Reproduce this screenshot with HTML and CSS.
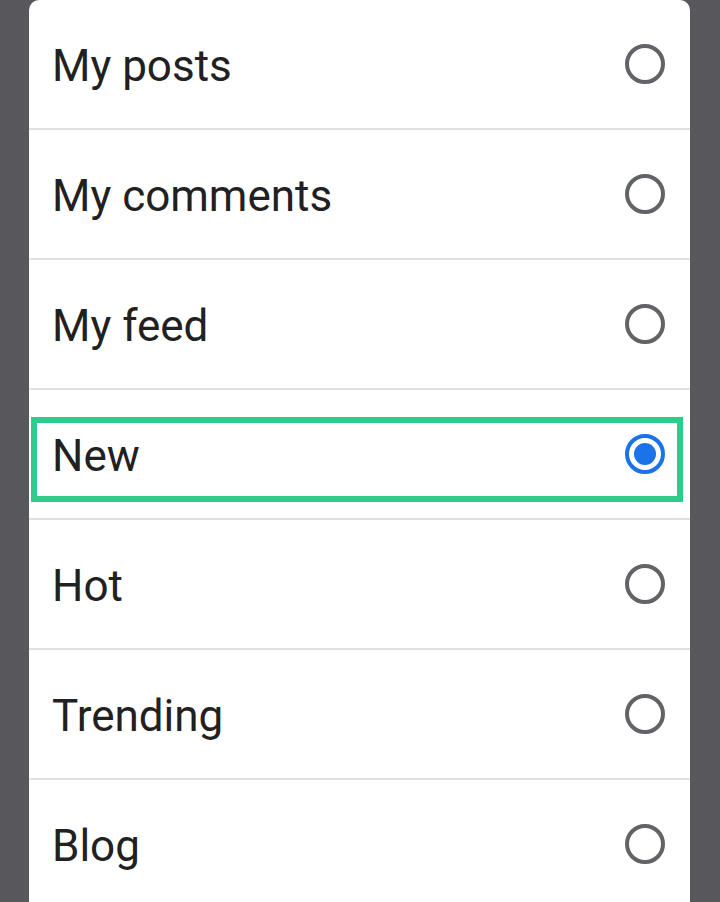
FILE: index.html
```html
<!DOCTYPE html>
<html lang="en">
<head>
    <meta charset="UTF-8">
    <meta name="viewport" content="width=device-width, initial-scale=1.0">
    <title>Feed filter</title>
    <link rel="stylesheet" href="styles.css">
</head>
<body>
    <div class="dialog">
        <div class="option">
            <span class="label">My posts</span>
            <span class="radio"></span>
        </div>
        <div class="option">
            <span class="label">My comments</span>
            <span class="radio"></span>
        </div>
        <div class="option">
            <span class="label">My feed</span>
            <span class="radio"></span>
        </div>
        <div class="option selected">
            <span class="label">New</span>
            <span class="radio checked"></span>
            <div class="highlight"></div>
        </div>
        <div class="option">
            <span class="label">Hot</span>
            <span class="radio"></span>
        </div>
        <div class="option">
            <span class="label">Trending</span>
            <span class="radio"></span>
        </div>
        <div class="option">
            <span class="label">Blog</span>
            <span class="radio"></span>
        </div>
    </div>
</body>
</html>
```

FILE: styles.css
```css
body {
    margin: 0;
    padding: 0;
    background: #58585c;
    font-family: Roboto, "Noto Sans", sans-serif;
    height: 902px;
    overflow: hidden;
}
.dialog {
    margin-left: 29px;
    width: 661px;
    background: white;
    border-radius: 10px 10px 0 0;
}
.option {
    position: relative;
    display: flex;
    align-items: center;
    justify-content: space-between;
    height: 128px;
    padding: 0 25px 0 23px;
    border-bottom: 2px solid #e0e0e0;
}
.label {
    font-size: 44px;
    color: #212121;
    padding-top: 4px;
}
.radio {
    box-sizing: border-box;
    width: 40px;
    height: 40px;
    border: 4px solid #626366;
    border-radius: 50%;
    display: flex;
    align-items: center;
    justify-content: center;
}
.radio.checked {
    border-color: #1a73e8;
}
.radio.checked::after {
    content: "";
    width: 22px;
    height: 22px;
    border-radius: 50%;
    background: #1a73e8;
}
.highlight {
    position: absolute;
    left: 2px;
    right: 7px;
    top: 27px;
    height: 85px;
    box-sizing: border-box;
    border: 6px solid #2ecc8b;
}
```
